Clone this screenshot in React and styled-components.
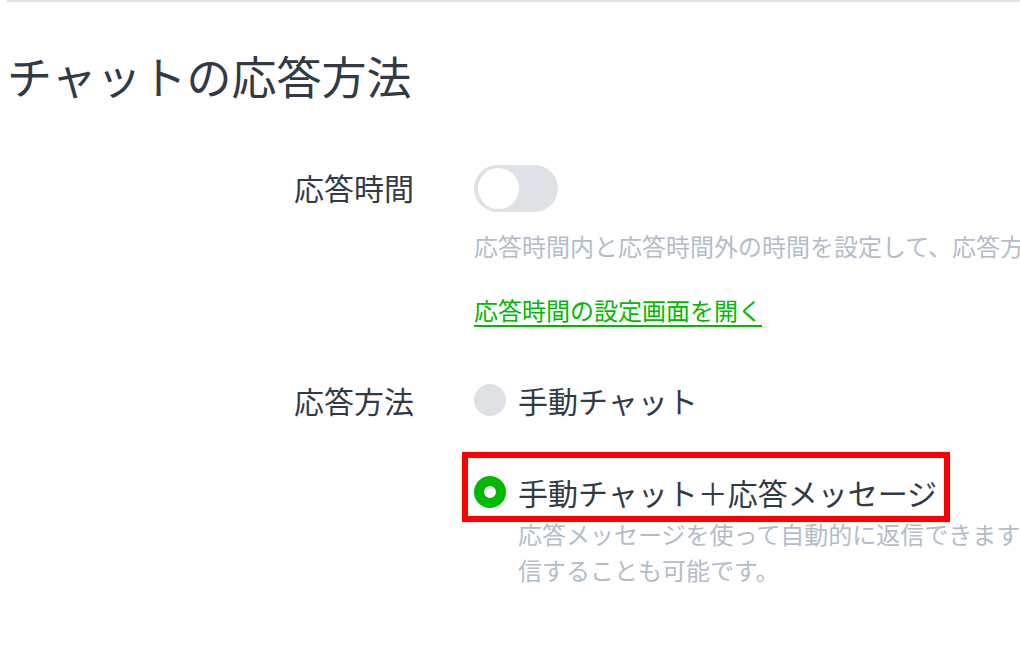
import React from 'react';
import styled, { createGlobalStyle } from 'styled-components';

const GlobalStyle = createGlobalStyle`
    body {
        margin: 0;
        background: #fff;
        overflow: hidden;
        font-family: "Noto Sans CJK JP", "Noto Sans", sans-serif;
        color: #323b45;
    }
`

function App (){
    return <Page>
        <GlobalStyle />
        <Divider />
        <Title>チャットの応答方法</Title>
        <Form>
            <Label tall>応答時間</Label>
            <Field>
                <Toggle><Knob /></Toggle>
                <Help nowrap>応答時間内と応答時間外の時間を設定して、応答方法を切り替えることができます。</Help>
                <SettingsLink href='#'>応答時間の設定画面を開く</SettingsLink>
            </Field>

            <Label>応答方法</Label>
            <Field>
                <Option>
                    <Radio />
                    手動チャット
                </Option>
                <Options>
                    <Highlight>
                        <Option>
                            <Radio checked />
                            手動チャット＋応答メッセージ
                        </Option>
                    </Highlight>
                    <Help indent>応答メッセージを使って自動的に返信できますが、チャットで手動で返信することも可能です。</Help>
                </Options>
            </Field>
        </Form>
    </Page>
}

export default App

const Page = styled.div`
    padding-left: 7px;
    width: 1400px;
`

const Divider = styled.div`
    border-top: 2px solid #e5e5e5;
`

const Title = styled.h1`
    margin: 40px 0 0;
    font-size: 45px;
    font-weight: 400;
    line-height: 1.5;
`

const Form = styled.div`
    display: grid;
    grid-template-columns: 407px 1fr;
    column-gap: 60px;
    row-gap: 50px;
    margin-top: 53px;
`

const Label = styled.div`
    text-align: right;
    font-size: 30px;
    line-height: ${p => p.tall ? '48px' : '45px'};
`

const Field = styled.div`
    display: flex;
    flex-direction: column;
    align-items: flex-start;
`

const Toggle = styled.div`
    width: 84px;
    height: 47px;
    margin-top: 2px;
    border-radius: 24px;
    background: #dee1e6;
    display: flex;
    align-items: center;
    padding: 0 4px;
    box-sizing: border-box;
`

const Knob = styled.div`
    width: 41px;
    height: 41px;
    border-radius: 50%;
    background: #fff;
`

const Help = styled.p`
    margin: 16px 0 0;
    font-size: 24px;
    line-height: 36px;
    color: #b3bdc9;
    white-space: ${p => p.nowrap ? 'nowrap' : 'normal'};
    ${p => p.indent && `
        margin: 1px 0 0 44px;
        width: 768px;
    `}
`

const SettingsLink = styled.a`
    margin-top: 28px;
    font-size: 24px;
    line-height: 36px;
    color: #00b900;
    text-decoration: underline;
    text-decoration-thickness: 2px;
    text-underline-offset: 5px;
`

const Options = styled.div`
    display: flex;
    flex-direction: column;
    align-items: flex-start;
    margin-top: 47px;
`

const Option = styled.label`
    display: inline-flex;
    align-items: center;
    gap: 12px;
    font-size: 30px;
    line-height: 45px;
    white-space: nowrap;
`

const Radio = styled.span`
    width: 32px;
    height: 32px;
    border-radius: 50%;
    box-sizing: border-box;
    flex-shrink: 0;
    background: ${p => p.checked ? '#fff' : '#dee1e6'};
    border: ${p => p.checked ? '10.5px solid #00b900' : 'none'};
`

const Highlight = styled.div`
    position: relative;
    display: inline-flex;

    &::after {
        content: '';
        position: absolute;
        top: -18px;
        left: -12px;
        right: -13px;
        bottom: -7px;
        border: 6.5px solid #ff0000;
        pointer-events: none;
    }
`
